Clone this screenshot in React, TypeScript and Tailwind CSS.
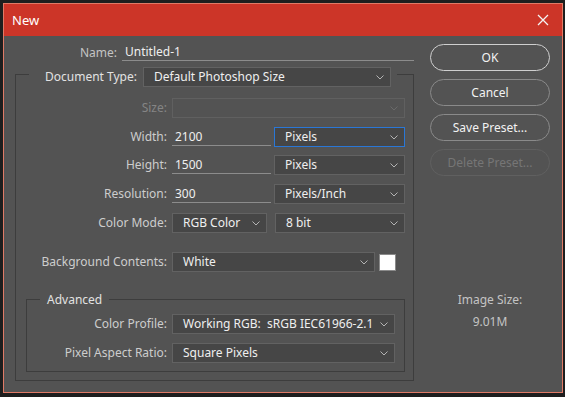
import React from 'react'

const Chevron = ({ dim }: { dim?: boolean }) => (
  <svg width="8" height="5" viewBox="0 0 8 5" className="shrink-0">
    <path d="M0.5 0.5 L4 4 L7.5 0.5" fill="none" stroke={dim ? '#6a6a6a' : '#b4b4b4'} strokeWidth="1" />
  </svg>
)

const Select = ({ value, w, active, disabled }: { value?: string; w: string; active?: boolean; disabled?: boolean }) => (
  <div
    className={`${w} h-[20px] flex items-center justify-between pl-[10px] pr-[6px] border ${
      active ? 'border-[#2a77d6]' : disabled ? 'border-[#606060] bg-[#535353]' : 'border-[#626262]'
    } ${disabled ? '' : 'bg-[#464646]'} text-[#efefef]`}
  >
    <span className="whitespace-pre">{value}</span>
    <Chevron dim={disabled} />
  </div>
)

const Field = ({ value, w }: { value: string; w: string }) => (
  <div className={`${w} h-[17px] flex items-center pl-[3px] border-b border-[#8c8c8c] text-[#efefef]`}>{value}</div>
)

const Row = ({ label, children, labelW = 'w-[156px]', dim, className = '' }: { label: string; children: React.ReactNode; labelW?: string; dim?: boolean; className?: string }) => (
  <div className={`flex items-center h-[20px] ${className}`}>
    <span className={`${labelW} text-right pr-[5px] shrink-0 ${dim ? 'text-[#858585]' : 'text-[#cdcdcd]'}`}>{label}</span>
    {children}
  </div>
)

const Button = ({ label, primary, disabled }: { label: string; primary?: boolean; disabled?: boolean }) => (
  <div
    className={`h-[27px] w-[120px] rounded-full border flex items-center justify-center ${
      primary ? 'border-[#cfcfcf] text-[#f2f2f2]' : disabled ? 'border-[#606060] text-[#767676]' : 'border-[#8a8a8a] text-[#f2f2f2]'
    }`}
  >
    {label}
  </div>
)

const App = () => {
  return (
    <div
      className="w-[565px] h-[397px] bg-[#1e1e1e] pt-[3px] pl-[3px] text-[12px] leading-[16px]"
      style={{ fontFamily: '"Noto Sans", "Open Sans", sans-serif' }}
    >
      <div className="w-[560px] h-[390px] border border-[#e07a66] bg-[#535353] flex flex-col">
        {/* title bar */}
        <div className="h-[32px] bg-[#cc3528] flex items-center justify-between pl-[8px] pr-[13px] text-white text-[13px]">
          <span>New</span>
          <svg width="12" height="12" viewBox="0 0 12 12">
            <path d="M1 1 L11 11 M11 1 L1 11" stroke="#f4f4f4" strokeWidth="1.3" />
          </svg>
        </div>

        <div className="flex pl-[11px] gap-[16px]">
          {/* left column */}
          <div className="w-[399px] flex flex-col">
            <div className="flex items-end h-[17px] mt-[8px]">
              <span className="w-[107px] text-right pr-[5px] text-[#c4c4c4]">Name:</span>
              <Field value="Untitled-1" w="w-[292px]" />
            </div>

            {/* document group */}
            <div className="mt-[13px] h-[307px] border border-[#3d3d3d] flex flex-col">
              <div className="flex -mt-[8px] ml-[13px] mr-[16px] pl-[16px] pr-[6px] bg-[#535353] items-center h-[20px]">
                <span className="text-[#e2e2e2] pr-[6px]">Document Type:</span>
                <Select value="Default Photoshop Size" w="w-[248px]" />
              </div>

              <Row label="Size:" dim className="mt-[11px]">
                <Select w="w-[233px]" disabled />
              </Row>
              <Row label="Width:" className="mt-[9px]">
                <Field value="2100" w="w-[99px]" />
                <div className="ml-[3px]"><Select value="Pixels" w="w-[131px]" active /></div>
              </Row>
              <Row label="Height:" className="mt-[8px]">
                <Field value="1500" w="w-[99px]" />
                <div className="ml-[3px]"><Select value="Pixels" w="w-[131px]" /></div>
              </Row>
              <Row label="Resolution:" className="mt-[9px]">
                <Field value="300" w="w-[99px]" />
                <div className="ml-[3px]"><Select value="Pixels/Inch" w="w-[131px]" /></div>
              </Row>
              <Row label="Color Mode:" className="mt-[9px]">
                <Select value="RGB Color" w="w-[95px]" />
                <div className="ml-[8px]"><Select value="8 bit" w="w-[130px]" /></div>
              </Row>
              <Row label="Background Contents:" className="mt-[19px]">
                <Select value="White" w="w-[203px]" />
                <div className="ml-[4px] w-[17px] h-[17px] bg-white border border-[#8a8a8a]" />
              </Row>

              {/* advanced group */}
              <div className="mt-[27px] ml-[10px] mr-[8px] h-[73px] border border-[#3d3d3d] flex flex-col">
                <div className="-mt-[8px] ml-[13px] self-start px-[7px] bg-[#535353] h-[16px] flex items-center text-[#e2e2e2]">
                  Advanced
                </div>
                <Row label="Color Profile:" labelW="w-[145px]" className="mt-[6px]">
                  <Select value="Working RGB:  sRGB IEC61966-2.1" w="w-[223px]" />
                </Row>
                <Row label="Pixel Aspect Ratio:" labelW="w-[145px]" className="mt-[9px]">
                  <Select value="Square Pixels" w="w-[223px]" />
                </Row>
              </div>
            </div>
          </div>

          {/* right column */}
          <div className="w-[120px] flex flex-col pt-[8px] gap-[8px]">
            <Button label="OK" primary />
            <Button label="Cancel" />
            <Button label="Save Preset..." />
            <Button label="Delete Preset..." disabled />
            <div className="mt-[108px] flex flex-col items-center text-[#c4c4c4] gap-[6px]">
              <span>Image Size:</span>
              <span>9.01M</span>
            </div>
          </div>
        </div>
      </div>
    </div>
  )
}

export default App
